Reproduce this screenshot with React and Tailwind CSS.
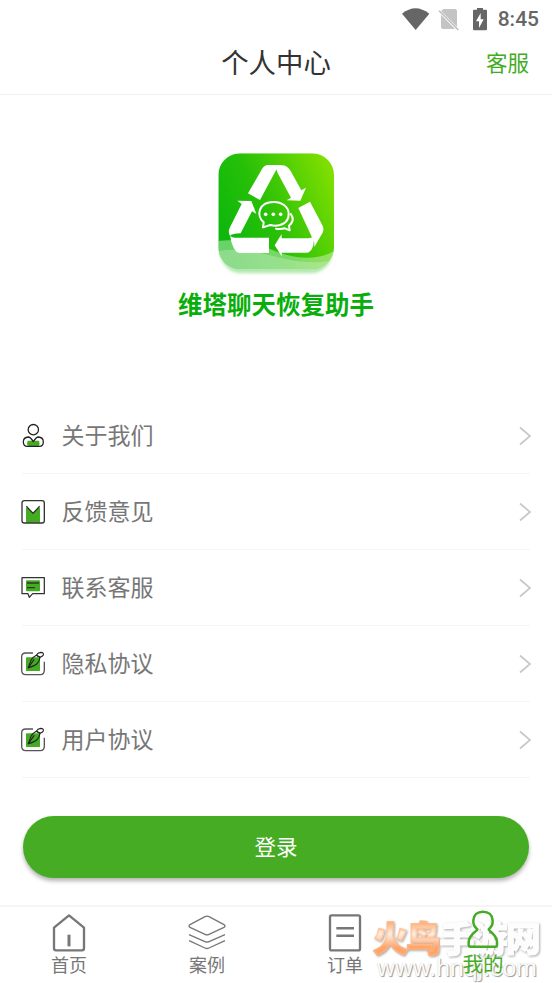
import React from 'react'

const AboutIcon = () => (
    <svg viewBox="32 37 76 80" className="w-[25.33px] h-[26.67px]" fill="none" stroke="#222" strokeWidth="3.8">
        <path d="M52 93h34q4 9-1 17H53q-5-8-1-17z" fill="#44ac23" stroke="none" />
        <circle cx="69" cy="60" r="15.5" />
        <path d="M54 82q-15 1-15 15 0 13 12 13h36q12 0 12-13 0-14-15-15-6 0-15 14-9-14-15-14z" strokeLinejoin="round" />
    </svg>
)

const FeedbackIcon = () => (
    <svg viewBox="33 266 76 76" className="w-[25.33px] h-[25.33px]" fill="none" stroke="#333" strokeWidth="4">
        <path d="M48 292h5l16 17 16-17h5v45H48z" fill="#44ac23" stroke="none" />
        <rect x="36" y="271" width="67" height="67" rx="7" />
        <path d="M49 288l20 21 20-21" />
    </svg>
)

const ContactIcon = () => (
    <svg viewBox="33 32 76 72" className="w-[25.33px] h-[24px]" fill="none" stroke="#333" strokeWidth="3.8">
        <rect x="48" y="45" width="42" height="33" rx="3" fill="#44ac23" stroke="none" />
        <path d="M36 37h67v48H68l-10 11-4-11H36z" strokeLinejoin="round" />
        <path d="M51 53h36M51 67h24" />
    </svg>
)

const AgreementIcon = () => (
    <svg viewBox="33 258 76 76" className="w-[25.33px] h-[25.33px] overflow-visible" fill="none" stroke="#555" strokeWidth="4">
        <rect x="48" y="277" width="42" height="41" rx="2" fill="#44ac23" stroke="none" />
        <path d="M69 264H47q-12 0-12 12v40q0 13 12 13h44q12 0 12-13v-26" />
        <g stroke="#222" strokeWidth="3.4" strokeLinejoin="round" strokeLinecap="round">
            <path d="M79 271q4-8 13-9 10 1 8 8-2 4-10 7z" fill="#fff" />
            <path d="M55 308l8-22q5-10 16-15l11 6q-1 11-10 20-7 6-25 11z" />
            <path d="M55 308l17-24" />
        </g>
    </svg>
)

const HomeIcon = () => (
    <svg viewBox="153 338 108 120" className="w-9 h-10" fill="none" stroke="#777" strokeWidth="7" strokeLinejoin="round">
        <path d="M162 382l45-37 45 37v62q0 6-6 6h-78q-6 0-6-6z" />
        <path d="M207 403v35" strokeWidth="9" />
    </svg>
)

const CaseIcon = () => (
    <svg viewBox="567 338 108 120" className="w-9 h-10 overflow-visible" fill="none" stroke="#777" strokeWidth="4" strokeLinejoin="round">
        <path d="M615 349q6-3 12 0l45 24q6 4 0 8l-45 21q-6 3-12 0l-45-21q-6-4 0-8z" />
        <path d="M567 403l48 21q6 3 12 0l48-21M567 421l48 22q6 3 12 0l48-22" />
    </svg>
)

const OrderIcon = () => (
    <svg viewBox="153 338 108 120" className="w-9 h-10" fill="none" stroke="#777" strokeWidth="7">
        <rect x="162" y="345" width="90" height="105" rx="5" />
        <path d="M181 384h53M181 406h53" strokeWidth="7.5" />
    </svg>
)

const MineIcon = () => (
    <svg viewBox="567 328 108 120" className="w-9 h-10" fill="none" stroke="#44ac23" strokeWidth="7.5" strokeLinejoin="round">
        <path d="M604 389c-9-8-13-17-12-27 1-16 12-26 29-26s28 10 29 26c1 10-3 19-12 27 0 6 24 14 25 38v8q0 6-6 6h-73q-6 0-6-6v-8c1-24 26-32 26-38z" />
    </svg>
)

const Logo = () => (
    <svg viewBox="45 30 367 390" className="w-[122.33px] h-[130px]">
        <defs>
            <linearGradient id="leaf" x1="0" y1="0.65" x2="1" y2="0.2">
                <stop offset="0" stopColor="#0db70c" />
                <stop offset="0.4" stopColor="#28c008" />
                <stop offset="1" stopColor="#80df00" />
            </linearGradient>
            <clipPath id="tile">
                <rect x="55" y="40" width="347" height="347" rx="65" />
            </clipPath>
            <filter id="glow" x="-10%" y="-10%" width="120%" height="120%">
                <feGaussianBlur stdDeviation="5" />
            </filter>
        </defs>
        <rect x="60" y="70" width="337" height="330" rx="65" fill="#b4e8b0" filter="url(#glow)" />
        <g clipPath="url(#tile)">
            <path d="M55 40h347v347H55z" fill="url(#leaf)" />
            <path d="M55 303C120 295 175 312 225 333S350 365 402 333v54H55z" fill="#fff" fillOpacity="0.38" />
            <path d="M55 333C130 320 200 345 260 358S370 368 402 361v26H55z" fill="#fff" fillOpacity="0.24" />
        </g>
        <g fill="#fff">
            <path d="M144 160l42-73q7-12 18-12h42q-12 6-18 16l-48 89z" />
            <path d="M229 88q5-12 17-12 16 0 26 17l32 58 14-8-17 39-41-1 13-8-40-74q-2-5-4-11z" />
            <path d="M112 182l42 1 15 38-13-7-34 66q-26 1-32 7-7-11 0-25l35-70z" />
            <path d="M91 287q5 7 17 6h99v46h-89q-8 0-13-9-12-19-14-43z" />
            <path d="M295 204l35-19 38 72q5 12-1 23l-24 41q2-13-6-27z" />
            <path d="M224 316l21-34v13h80q10 0 14-6 5 20-2 35-6 14-18 14h-74v11z" />
        </g>
        <g fill="none" stroke="#fff" strokeWidth="6" strokeLinejoin="round" strokeLinecap="round">
            <path d="M191 247c-24-20-15-61 30-61 25 0 45 14 45 36 0 30-29 39-55 33l-22 7z" />
            <path d="M272 222c11 13 7 25-5 35l2 14-14-6q-16 4-27 1" />
        </g>
        <g fill="#fff">
            <circle cx="197" cy="223" r="5.5" />
            <circle cx="220" cy="223" r="5.5" />
            <circle cx="242" cy="223" r="5.5" />
        </g>
    </svg>
)

const StatusIcons = () => (
    <svg viewBox="60 15 264 78" className="w-22 h-[26px]">
        <path d="M63 38Q103 5 145 38L104 87z" fill="#666" />
        <path d="M188 24h34q6 0 6 6v48L180 30zM180 41l42 43h-36q-6 0-6-6z" fill="#c4c4c4" />
        <path d="M174 29l58 58" stroke="#bbb" strokeWidth="4" />
        <path d="M288 21h18v5h9q3 0 3 3v55q0 4-4 4h-34q-4 0-4-4V29q0-3 3-3h9z" fill="#666" />
        <path d="M299 36l-14 25h9v20l14-26h-9z" fill="#fff" />
    </svg>
)

const menu = [
    { label: '关于我们', icon: <AboutIcon /> },
    { label: '反馈意见', icon: <FeedbackIcon /> },
    { label: '联系客服', icon: <ContactIcon /> },
    { label: '隐私协议', icon: <AgreementIcon /> },
    { label: '用户协议', icon: <AgreementIcon /> },
]

const tabs = [
    { label: '首页', icon: <HomeIcon /> },
    { label: '案例', icon: <CaseIcon /> },
    { label: '订单', icon: <OrderIcon /> },
]

const Watermark = () => (
    <div className="absolute left-[373px] top-[5px] w-[170px] pointer-events-none">
        <div className="flex text-[35px] leading-[50px] h-[44px] font-black tracking-[-1.8px] whitespace-nowrap">
            <span className="bg-linear-to-b from-[#ffb27d] from-25% via-[#ffeee2] via-50% to-[#ffa468] to-80% bg-clip-text text-transparent [-webkit-text-stroke:1.5px_#ffb98899] [filter:drop-shadow(1px_1px_1px_#aaa)]">火鸟</span>
            <span className="text-[#fdfdfd] [-webkit-text-stroke:1px_#fff] [filter:drop-shadow(1px_1px_1px_#aaa)]">手游网</span>
        </div>
        <div className="font-['Liberation_Sans'] text-[24.8px] leading-6 text-[#fcfcfc] pl-1 [text-shadow:1px_1px_1px_#999,0_0_1px_#ccc]">www.hnqj.com</div>
    </div>
)

const App = () => {
    return (
        <div className="w-[552px] h-[983px] bg-white flex flex-col overflow-hidden font-['Noto_Sans_CJK_SC',sans-serif]">
            <div className="h-[37px] shrink-0 flex items-center justify-end pr-[13px] gap-[9px]">
                <StatusIcons />
                <span className="font-['Roboto'] font-medium text-[21px] leading-none text-[#666] pt-0.5">8:45</span>
            </div>
            <header className="h-[58px] shrink-0 grid grid-cols-3 items-center border-b border-[#f0f0f0] pb-[7px]">
                <h1 className="col-start-2 text-center text-[27.4px] leading-10 text-[#333] pb-0.5">个人中心</h1>
                <span className="text-right pr-[23px] text-[21.5px] leading-10 text-[#44ac23]">客服</span>
            </header>

            <section className="h-[303px] shrink-0 flex flex-col items-center pt-[55px]">
                <Logo />
                <h2 className="mt-1.5 text-[24.5px] leading-9 font-bold text-[#09ae0b]">维塔聊天恢复助手</h2>
            </section>

            <ul className="px-[22px] shrink-0">
                {menu.map((item) => (
                    <li key={item.label} className="h-[76px] flex items-center border-b border-[#f5f5f5]">
                        <span className="w-[39px] flex -ml-px">{item.icon}</span>
                        <span className="text-[23px] leading-8 text-[#777] ml-[1.5px] pb-[3px]">{item.label}</span>
                        <svg viewBox="0 0 14 20" className="w-3.5 h-5 ml-auto -mr-0.5" fill="none" stroke="#c8c8c8" strokeWidth="1.7">
                            <path d="M2 1.5l10 8.5-10 8.5" />
                        </svg>
                    </li>
                ))}
            </ul>

            <button className="mt-[38px] mx-[23px] h-[62px] shrink-0 rounded-full bg-[#46ac23] text-white text-[21.5px] pb-0.5 shadow-[0_3px_4px_#0000004d]">
                登录
            </button>

            <nav className="relative mt-[27px] h-[78px] shrink-0 grid grid-cols-4 border-t-2 border-[#f5f5f5]">
                {tabs.map((tab) => (
                    <div key={tab.label} className="flex flex-col items-center pt-[6px] text-[#777]">
                        {tab.icon}
                        <span className="text-[18px] leading-[26px] -mt-0.5">{tab.label}</span>
                    </div>
                ))}
                <div className="relative z-10 flex flex-col items-center pt-[2px] text-[#44ac23]">
                    <MineIcon />
                    <span className="text-[20.5px] leading-[30px] -mt-px">我的</span>
                </div>
                <Watermark />
            </nav>
        </div>
    )
}

export default App
